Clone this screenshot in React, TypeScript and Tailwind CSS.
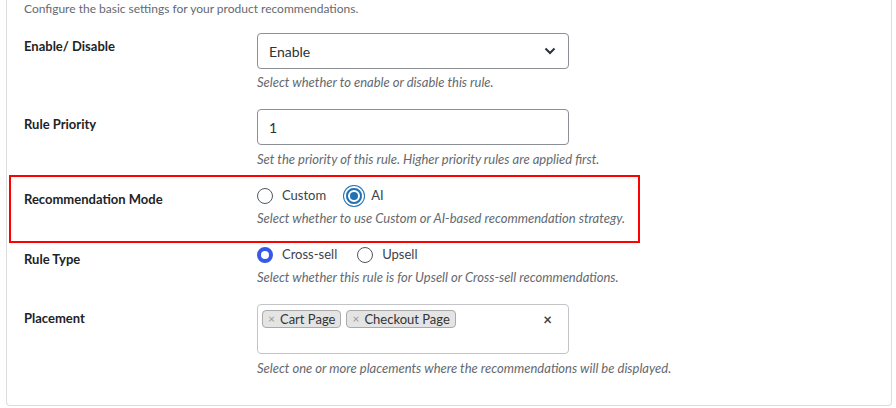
import { useState } from "react"

const Radio = ({ checked, focused, label, onClick }: { checked: boolean; focused?: boolean; label: string; onClick: () => void }) => {
    return (
        <label onClick={onClick} className="flex items-center gap-[9px] cursor-pointer">
            {checked && focused ? (
                <span className="w-[16px] h-[16px] rounded-full border-[2px] border-[#2271b1] flex items-center justify-center shadow-[0_0_0_2px_#ffffff,0_0_0_3px_#2271b1]">
                    <span className="w-[8px] h-[8px] rounded-full bg-[#2271b1]" />
                </span>
            ) : checked ? (
                <span className="w-[16px] h-[16px] rounded-full border-[4px] border-[#3858e9] bg-white" />
            ) : (
                <span className="w-[16px] h-[16px] rounded-full border border-[#50575e] bg-white" />
            )}
            <span className="text-[13px] text-[#3c434a]">{label}</span>
        </label>
    )
}

const Help = ({ children, mt }: { children: string; mt: string }) => (
    <p className={`${mt} text-[13px] leading-[18px] italic text-[#646970] whitespace-nowrap`}>{children}</p>
)

const labelCls = "text-[13px] leading-[18px] font-bold text-[#1d2327]"

export default function App() {
    const [mode, setMode] = useState("ai")
    const [ruleType, setRuleType] = useState("cross")
    const [tags, setTags] = useState(["Cart Page", "Checkout Page"])

    return (
        <div className="w-[896px] h-[408px] bg-white overflow-hidden" style={{ fontFamily: 'Lato, "Open Sans", sans-serif' }}>
            <div className="ml-[6px] w-[886px] border-x border-b border-[#dcdcde] rounded-b-[4px] pl-[17px] pb-[28px]">
                <p className="text-[12px] leading-[18px] text-[#646970]">Configure the basic settings for your product recommendations.</p>

                {/* enable */}
                <div className="grid grid-cols-[233px_1fr]">
                    <div className={`pt-[19px] ${labelCls}`}>Enable/ Disable</div>
                    <div className="pt-[15px]">
                        <div className="w-[312px] h-[36px] border border-[#8c8f94] rounded-[4px] flex items-center justify-between pl-[11px] pr-[12px]">
                            <span className="text-[14px] text-[#2c3338]">Enable</span>
                            <svg width="12" height="8" viewBox="0 0 12 8" fill="none">
                                <path d="M1.5 1.5 L6 6 L10.5 1.5" stroke="#2c3338" strokeWidth="2" />
                            </svg>
                        </div>
                        <Help mt="mt-[4px]">Select whether to enable or disable this rule.</Help>
                    </div>
                </div>

                {/* priority */}
                <div className="grid grid-cols-[233px_1fr] pt-[18px]">
                    <div className={`pt-[6px] ${labelCls}`}>Rule Priority</div>
                    <div>
                        <div className="w-[312px] h-[36px] border border-[#8c8f94] rounded-[4px] flex items-center pl-[11px]">
                            <span className="text-[14px] text-[#2c3338]">1</span>
                        </div>
                        <Help mt="mt-[5px]">Set the priority of this rule. Higher priority rules are applied first.</Help>
                    </div>
                </div>

                {/* mode */}
                <div className="mt-[7px] -ml-[15px] w-[631px] border-[2px] border-[#ff0000] pl-[13px] pt-[9px] pb-[14px] grid grid-cols-[233px_1fr]">
                    <div className={`pt-[4px] ${labelCls}`}>Recommendation Mode</div>
                    <div>
                        <div className="flex items-center gap-[20px] h-[20px]">
                            <Radio checked={mode === "custom"} focused label="Custom" onClick={() => setMode("custom")} />
                            <Radio checked={mode === "ai"} focused label="AI" onClick={() => setMode("ai")} />
                        </div>
                        <Help mt="mt-[3px]">Select whether to use Custom or AI-based recommendation strategy.</Help>
                    </div>
                </div>

                {/* rule type */}
                <div className="grid grid-cols-[233px_1fr] pt-[2px]">
                    <div className={`pt-[5px] ${labelCls}`}>Rule Type</div>
                    <div>
                        <div className="flex items-center gap-[20px] h-[20px]">
                            <Radio checked={ruleType === "cross"} label="Cross-sell" onClick={() => setRuleType("cross")} />
                            <Radio checked={ruleType === "up"} label="Upsell" onClick={() => setRuleType("up")} />
                        </div>
                        <Help mt="mt-[3px]">Select whether this rule is for Upsell or Cross-sell recommendations.</Help>
                    </div>
                </div>

                {/* placement */}
                <div className="grid grid-cols-[233px_1fr] pt-[18px]">
                    <div className={`pt-[5px] ${labelCls}`}>Placement</div>
                    <div>
                        <div className="relative w-[312px] h-[50px] border border-[#c3c4c7] rounded-[4px] pl-[4px] pt-[5px] flex items-start gap-[5px]">
                            {tags.map((t) => (
                                <span key={t} className="h-[18px] flex items-center gap-[5px] px-[5px] bg-[#e4e4e4] border border-[#aaaaaa] rounded-[4px] text-[13px] text-[#333333] leading-none">
                                    <button onClick={() => setTags(tags.filter((x) => x !== t))} className="text-[12px] text-[#999999]">×</button>
                                    {t}
                                </span>
                            ))}
                            <button onClick={() => setTags([])} className="absolute right-[16px] top-[7px] text-[15px] font-bold text-[#444444] leading-none">×</button>
                        </div>
                        <Help mt="mt-[5px]">Select one or more placements where the recommendations will be displayed.</Help>
                    </div>
                </div>
            </div>
        </div>
    )
}
